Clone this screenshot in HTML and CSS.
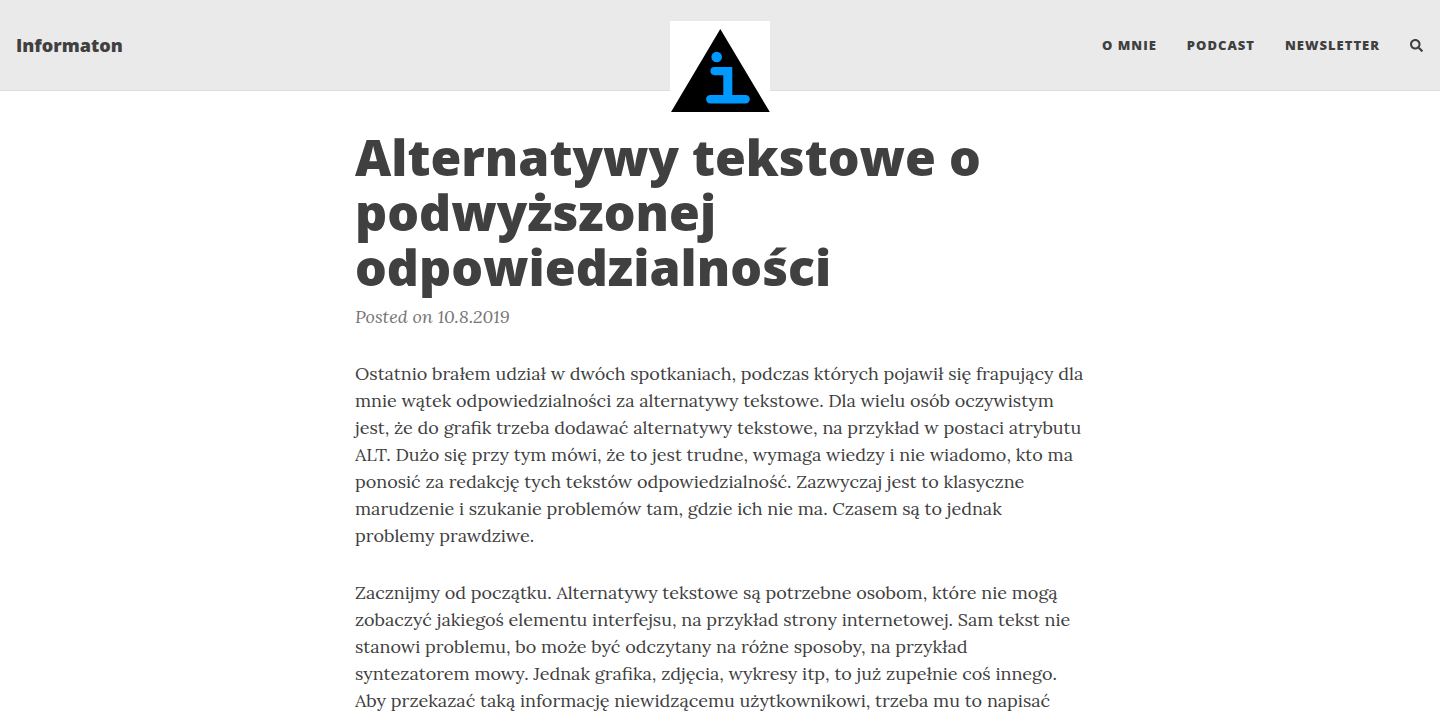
FILE: index.html
```html
<!DOCTYPE html>
<html lang="pl">
<head>
<meta charset="utf-8">
<meta name="viewport" content="width=device-width, initial-scale=1">
<title>Alternatywy tekstowe o podwyższonej odpowiedzialności</title>
<link rel="stylesheet" href="styles.css">
</head>
<body>
<nav class="navbar">
  <a class="brand" href="#">Informaton</a>
  <ul class="menu">
    <li><a href="#">O mnie</a></li>
    <li><a href="#">Podcast</a></li>
    <li><a href="#">Newsletter</a></li>
    <li><a class="search" href="#" aria-label="Szukaj"><svg viewBox="0 0 512 512" aria-hidden="true"><path d="M505 442.700 405.300 343c-4.500-4.500-10.600-7-17-7H372c27.600-35.300 44-79.700 44-128C416 93.100 322.900 0 208 0S0 93.100 0 208s93.100 208 208 208c48.300 0 92.700-16.400 128-44v16.300c0 6.400 2.500 12.500 7 17l99.700 99.700c9.400 9.400 24.600 9.400 33.900 0l28.300-28.300c9.400-9.400 9.400-24.600.1-34zM208 336c-70.700 0-128-57.200-128-128 0-70.700 57.200-128 128-128 70.700 0 128 57.200 128 128 0 70.700-57.200 128-128 128z"/></svg></a></li>
  </ul>
  <a class="avatar" href="#" aria-label="Informaton">
    <svg viewBox="0 0 100 100" aria-hidden="true">
      <path fill="#fff" d="M0 0h100v100H0z"/>
      <path d="M50.300 8 99.800 91H1z"/>
      <path fill="#0099ff" d="M44.500 46H62.300V74H75.600a4.200 4.200 0 0 1 0 8.400H40.300a4.200 4.200 0 0 1 0-8.400H53.300V54.200H44.500a4.100 4.100 0 0 1 0-8.200z"/>
      <circle cx="46.700" cy="36" r="5.300" fill="#0099ff"/>
    </svg>
  </a>
</nav>
<main class="post">
  <header class="heading">
    <h1>Alternatywy tekstowe o podwyższonej odpowiedzialności</h1>
    <span class="meta">Posted on 10.8.2019</span>
  </header>
  <article>
    <p>Ostatnio brałem udział w dwóch spotkaniach, podczas których pojawił się frapujący dla mnie wątek odpowiedzialności za alternatywy tekstowe. Dla wielu osób oczywistym jest, że do grafik trzeba dodawać alternatywy tekstowe, na przykład w postaci atrybutu ALT. Dużo się przy tym mówi, że to jest trudne, wymaga wiedzy i nie wiadomo, kto ma ponosić za redakcję tych tekstów odpowiedzialność. Zazwyczaj jest to klasyczne marudzenie i szukanie problemów tam, gdzie ich nie ma. Czasem są to jednak problemy prawdziwe.</p>
    <p>Zacznijmy od początku. Alternatywy tekstowe są potrzebne osobom, które nie mogą zobaczyć jakiegoś elementu interfejsu, na przykład strony internetowej. Sam tekst nie stanowi problemu, bo może być odczytany na różne sposoby, na przykład syntezatorem mowy. Jednak grafika, zdjęcia, wykresy itp, to już zupełnie coś innego. Aby przekazać taką informację niewidzącemu użytkownikowi, trzeba mu to napisać</p>
  </article>
</main>
</body>
</html>
```
FILE: styles.css
```css
* { box-sizing: border-box; }
body { margin: 0; background: #fff; color: #404040; font: 18px/27px Lora, "Liberation Serif", serif; }
a { color: inherit; text-decoration: none; }
.navbar { position: relative; display: flex; align-items: center; justify-content: space-between; padding: 30px 16px; background: #eaeaea; border-bottom: 1px solid #dddddd; font-family: "Open Sans", sans-serif; }
.brand { font-size: 18px; line-height: 30px; font-weight: 800; }
.menu { display: flex; align-items: center; gap: 30px; margin: 0; padding: 0; list-style: none; font-size: 13px; font-weight: 800; letter-spacing: 1px; text-transform: uppercase; }
.search { display: block; padding-right: 1px; }
.search svg { display: block; width: 13px; height: 13px; fill: currentColor; }
.avatar { position: absolute; top: 21px; left: 50%; width: 100px; margin-left: -50px; }
.avatar svg { display: block; width: 100%; }
.post { max-width: 730px; margin: 0 auto; padding-top: 39px; }
h1 { margin: 0; font: 800 50px/55px "Open Sans", sans-serif; }
.meta { display: block; margin-top: 8px; color: #757575; font-style: italic; }
.heading { margin-bottom: 30px; }
p { margin: 0 0 30px; }
```
